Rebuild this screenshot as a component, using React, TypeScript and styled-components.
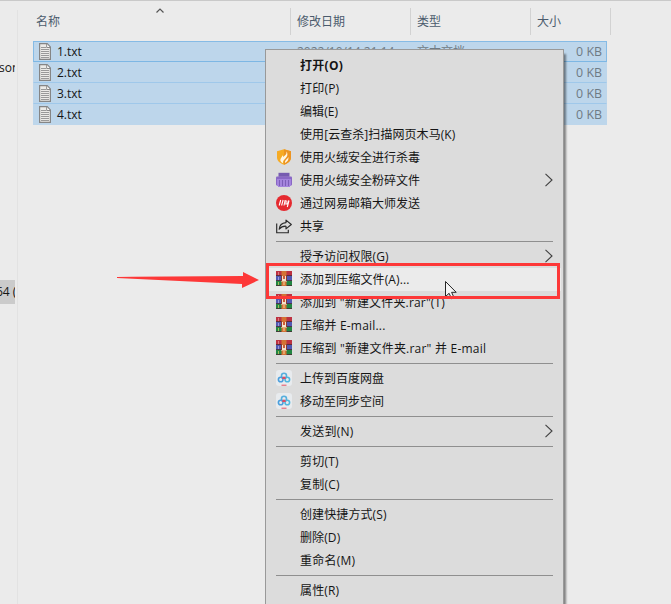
import React from "react";
import styled, { createGlobalStyle } from "styled-components";

const GlobalStyle = createGlobalStyle`
  * { box-sizing: border-box; }
  html, body { margin: 0; padding: 0; overflow: hidden; }
  body {
    background: #ebebeb;
    font-family: "Open Sans", "Noto Sans CJK SC", sans-serif;
    font-size: 12px;
    color: #151515;
  }
`;

const Window = styled.div`
  position: relative;
  display: flex;
  width: 671px;
  height: 604px;
  overflow: hidden;
  background: #ebebeb;
  border-top: 1px solid #c9c9c9;
`;

const Sidebar = styled.aside`
  display: flex;
  flex-direction: column;
  width: 18px;
  flex: none;
  padding-top: 56px;
  border-right: 1px solid #e2e2e2;
  margin-top: 9px;
`;

const SideItem = styled.div<{ $active?: boolean; $gap?: number; $shift: number }>`
  width: 15px;
  height: 24px;
  flex: none;
  overflow: hidden;
  line-height: 23px;
  white-space: nowrap;
  margin-top: ${(p) => (p.$gap ?? 0) - 10}px;
  text-indent: ${(p) => p.$shift}px;
  background: ${(p) => (p.$active ? "#cbcbcb" : "transparent")};
`;

const Files = styled.main`
  width: 592px;
  flex: none;
  margin-left: 15px;
`;

const HeaderRow = styled.div`
  position: relative;
  display: grid;
  grid-template-columns: 258px 120px 120px 80px;
  height: 40px;
  padding-top: 7px;
`;

const HeaderCell = styled.div<{ $inset: number }>`
  height: 27px;
  padding-left: ${(p) => p.$inset}px;
  border-right: 1px solid #d2d2d2;
  line-height: 28px;
  color: #4b5b6d;
`;

const SortMark = styled.svg`
  position: absolute;
  left: 122px;
  top: 6px;
`;

const FileRow = styled.div<{ $focused: boolean }>`
  display: grid;
  grid-template-columns: 23px 240px 120px 112px 1fr;
  width: 574px;
  height: 21px;
  line-height: 19px;
  padding: 0 4px 0 0;
  background: #bdd6eb;
  border: 1px solid ${(p) => (p.$focused ? "#86bbe5" : "#bdd6eb")};
  border-bottom-color: ${(p) => (p.$focused ? "#7db7e4" : "#9fc8ea")};
  &:last-child { border-bottom-color: #bdd6eb; }
`;

const FileIcon = styled.svg`
  margin: 1px 0 0 5px;
`;

const FileName = styled.span`
  font-size: 12px;
`;

const Meta = styled.span`
  color: #6f7a84;
  white-space: nowrap;
`;

const Size = styled(Meta)`
  text-align: right;
  font-size: 12.4px;
`;

const Menu = styled.div`
  position: absolute;
  left: 265px;
  top: 48px;
  width: 299px;
  height: 570px;
  padding: 4px 2px;
  background: #dcdcdc;
  border: 1px solid #999;
  box-shadow: 2px 5px 2px rgba(0, 0, 0, 0.45);
`;

const MenuItem = styled.div<{ $bold?: boolean; $hot?: boolean }>`
  display: grid;
  grid-template-columns: 32px 1fr 12px;
  align-items: center;
  height: 23px;
  line-height: 23px;
  padding-right: 5px;
  font-weight: ${(p) => (p.$bold ? 700 : 400)};
  background: ${(p) => (p.$hot ? "#ebebeb" : "transparent")};
`;

const IconSlot = styled.span`
  display: flex;
  width: 16px;
  height: 16px;
  margin: 0 0 1px 8px;
`;

const Label = styled.span<{ $spacing?: number }>`
  white-space: pre;
  letter-spacing: ${(p) => p.$spacing ?? 0}px;
`;

const Divider = styled.hr`
  height: 1px;
  margin: 3px 8px;
  border: 0;
  background: #8f8f8f;
`;

const HighlightFrame = styled.div`
  position: absolute;
  left: 266px;
  top: 262px;
  width: 294px;
  height: 36px;
  border: 3px solid #fd3838;
`;

const Arrow = styled.svg`
  position: absolute;
  left: 116px;
  top: 270px;
`;

const Cursor = styled.svg`
  position: absolute;
  left: 444px;
  top: 279px;
`;

const ChevronMark = styled.svg`
  display: block;
  margin-bottom: 2px;
`;

const DocumentIcon = () => (
  <FileIcon width="12" height="17" viewBox="0 0 12 17">
    <path d="M.6.6h7.600l3.200 3.400v12.300H.6z" fill="#ecebe8" stroke="#858585" strokeWidth="1.200" />
    <path d="M7.700 1v3.500h3.300" fill="#fff" stroke="#898989" />
    <path d="M2 4.500h5M2 6.500h8M2 8.500h8M2 10.500h8M2 12.500h8M2 14.500h8" stroke="#999" />
  </FileIcon>
);

const ShieldIcon = () => (
  <svg width="16" height="16" viewBox="0 0 16 16">
    <path d="M1 2.200 8 .3l7 1.900v6.200c0 3.500-3.200 5.800-7 7.400-3.800-1.600-7-3.900-7-7.400z" fill="#f6ab25" />
    <path d="M8 .3 15 2.200v6.200c0 3.500-3.200 5.800-7 7.400z" fill="#ec9423" />
    <path d="M10.500 2.500c.5 2.500-1.500 4-3.200 5.500-.3-.8-.4-1.300-1-1.800.1 1.800-2.300 3-2 5 .3 1.500 1.500 2.400 2.700 3.100-.5-2 .8-3.200 2.200-4.500 1.800-1.700 3.200-4.300 1.300-7.300z" fill="#fff6e3" />
    <path d="M12.300 7.800c-.3 1.800-1.800 2.600-2.700 3.600-.6.700-.7 1.500-.5 2.500 2.400-1.200 3.900-3.200 3.200-6.100z" fill="#fff6e3" />
  </svg>
);

const ShredderIcon = () => (
  <svg width="16" height="16" viewBox="0 0 16 16">
    <path d="M2.500 .8h11v4h-11z" fill="#765bb0" />
    <rect y="4.500" width="16" height="9" rx="1" fill="#8967c5" />
    <path d="M1 7h14v7h-1v1H2v-1H1z" fill="#a483dd" />
    <path d="M3.500 8v6M6.500 8v6M9.500 8v6M12.500 8v6" stroke="#7454ae" strokeWidth=".8" />
  </svg>
);

const MailMasterIcon = () => (
  <svg width="16" height="16" viewBox="0 0 16 16">
    <circle cx="8" cy="8" r="8" fill="#e52a30" />
    <path d="m3.200 10.500 1.500-5.500M5.600 10.500l1.500-5.500M8 10.500l1.200-5.500M10.300 5.500l-.5 3.500h1.700l1-3.500M13 5.500l-1.700 6.500" fill="none" stroke="#fff" strokeWidth="1.100" />
  </svg>
);

const ShareIcon = () => (
  <svg width="16" height="16" viewBox="0 0 16 16" fill="none" stroke="#292929" strokeWidth="1.150">
    <path d="M.7 5.500v9.200h11.600v-2.900" />
    <path d="M10 2.100 15.300 6.500 10 10.900V8.200C7 8 5 9 3.200 11.200 3.500 7.500 5.800 5 10 4.600z" strokeLinejoin="round" />
  </svg>
);

const ArchiveIcon = () => (
  <svg width="16" height="16" viewBox="0 0 16 16">
    <path d="M0 0h16v5H0z" fill="#bd3141" />
    <path d="M0 5h16v5H0z" fill="#5158b2" />
    <path d="M0 10h16v5H0z" fill="#238542" />
    <path d="M0 4.500h16M0 9.500h16M0 14.500h16" stroke="#4a2b34" strokeWidth=".8" />
    <path d="M2.500 1v3" stroke="#d9797f" />
    <path d="M2.500 6v3" stroke="#9c9cd8" />
    <path d="M2.500 11v3" stroke="#a3bd5b" />
    <path d="M5.500 0h5v15h-5z" fill="#d47334" />
    <path d="M5 5h6v5.500H5z" fill="#f4e3cb" />
    <path d="M5.500 4v6M10.500 4v6" stroke="#853b36" />
    <path d="M7 5h2v3H7z" fill="#d05a36" />
    <path d="M7.500 11h1v3h-1z" fill="#f2d5a2" />
  </svg>
);

const CloudDriveIcon = () => (
  <svg width="16" height="16" viewBox="0 0 16 16">
    <rect width="16" height="16" rx="3" fill="#e8ebee" />
    <g fill="none" strokeWidth="1.600">
      <circle cx="8" cy="5.700" r="2.500" stroke="#57afdd" />
      <circle cx="4.700" cy="9.500" r="2.300" stroke="#4a9fdd" />
      <circle cx="11.300" cy="9.500" r="2.300" stroke="#4eb7df" />
      <path d="m6.400 8.600 1.600-1.400 1.600 1.400" stroke="#df4d61" />
      <path d="M5.500 15.200h5" stroke="#e44f61" strokeWidth="1" />
    </g>
  </svg>
);

const Chevron = () => (
  <ChevronMark width="10" height="14" viewBox="0 0 10 14">
    <path d="m1.500 .8 6.500 6.200-6.500 6.200" fill="none" stroke="#414141" strokeWidth="1.100" />
  </ChevronMark>
);

const icons = {
  shield: ShieldIcon,
  shredder: ShredderIcon,
  mail: MailMasterIcon,
  share: ShareIcon,
  archive: ArchiveIcon,
  cloud: CloudDriveIcon,
};

interface Entry {
  text: string;
  icon?: keyof typeof icons;
  submenu?: boolean;
  bold?: boolean;
  hot?: boolean;
  spacing?: number;
}

const groups: Entry[][] = [
  [
    { text: "打开(O)", bold: true, spacing: 0.3 },
    { text: "打印(P)", spacing: 0.2 },
    { text: "编辑(E)", spacing: 0.1 },
    { text: "使用[云查杀]扫描网页木马(K)", spacing: 0.07 },
    { text: "使用火绒安全进行杀毒", icon: "shield" },
    { text: "使用火绒安全粉碎文件", icon: "shredder", submenu: true },
    { text: "通过网易邮箱大师发送", icon: "mail" },
    { text: "共享", icon: "share" },
  ],
  [
    { text: "授予访问权限(G)", submenu: true, spacing: 0.1 },
    { text: "添加到压缩文件(A)...", icon: "archive", hot: true, spacing: 0.1 },
    { text: '添加到 "新建文件夹.rar"(T)', icon: "archive", spacing: 0.17 },
    { text: "压缩并 E-mail...", icon: "archive", spacing: 0.2 },
    { text: '压缩到 "新建文件夹.rar" 并 E-mail', icon: "archive", spacing: 0.22 },
  ],
  [
    { text: "上传到百度网盘", icon: "cloud" },
    { text: "移动至同步空间", icon: "cloud" },
  ],
  [{ text: "发送到(N)", submenu: true, spacing: 0.25 }],
  [{ text: "剪切(T)", spacing: 0.2 }, { text: "复制(C)", spacing: 0.2 }],
  [
    { text: "创建快捷方式(S)", spacing: 0.1 },
    { text: "删除(D)", spacing: 0.1 },
    { text: "重命名(M)", spacing: 0.25 },
  ],
  [{ text: "属性(R)", spacing: 0.15 }],
];

export default function App() {
  return (
    <>
      <GlobalStyle />
      <Window>
        <Sidebar>
          <SideItem $shift={-1}>son</SideItem>
          <SideItem $shift={-4} $gap={210} $active>64 (</SideItem>
        </Sidebar>
        <Files>
          <HeaderRow>
            <HeaderCell $inset={3}>名称</HeaderCell>
            <HeaderCell $inset={6}>修改日期</HeaderCell>
            <HeaderCell $inset={6}>类型</HeaderCell>
            <HeaderCell $inset={6}>大小</HeaderCell>
            <SortMark width="10" height="7" viewBox="0 0 10 7">
              <path d="m1.500 5.500 3.500-3.500 3.500 3.500" fill="none" stroke="#555" strokeWidth="1.200" />
            </SortMark>
          </HeaderRow>
          {["1.txt", "2.txt", "3.txt", "4.txt"].map((name, i) => (
            <FileRow key={name} $focused={i === 0}>
              <DocumentIcon />
              <FileName>{name}</FileName>
              <Meta>2022/10/14 21:14</Meta>
              <Meta>文本文档</Meta>
              <Size>0 KB</Size>
            </FileRow>
          ))}
        </Files>
        <Menu role="menu">
          {groups.map((group, g) => (
            <React.Fragment key={g}>
              {g > 0 && <Divider />}
              {group.map((entry) => {
                const Icon = entry.icon ? icons[entry.icon] : null;
                return (
                  <MenuItem key={entry.text} role="menuitem" $bold={entry.bold} $hot={entry.hot}>
                    <IconSlot>{Icon && <Icon />}</IconSlot>
                    <Label $spacing={entry.spacing}>{entry.text}</Label>
                    {entry.submenu && <Chevron />}
                  </MenuItem>
                );
              })}
            </React.Fragment>
          ))}
        </Menu>
        <Cursor width="15" height="22" viewBox="0 0 15 22">
          <path d="M1.500 1.500v15l3.600-3.200 2.500 5.500 2.500-1.100-2.500-5.400h4.600z" fill="#f5f5f5" stroke="#252525" />
        </Cursor>
        <HighlightFrame />
        <Arrow width="144" height="20" viewBox="0 0 144 20">
          <path d="M1 6l16-.3L127 5V1l16 8-17 8v-4L1 7z" fill="#fd3838" />
        </Arrow>
      </Window>
    </>
  );
}
